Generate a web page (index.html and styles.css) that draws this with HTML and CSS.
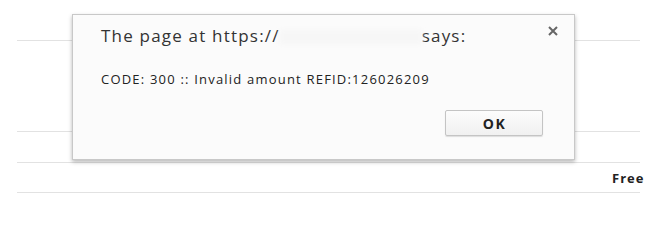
FILE: index.html
```html
<!DOCTYPE html>
<html>
<head>
<meta charset="utf-8">
<link rel="stylesheet" href="styles.css">
</head>
<body>
<div class="page">
  <div class="rows">
    <div class="row row-a"></div>
    <div class="row row-b"></div>
    <div class="row row-c"></div>
    <div class="row row-d"><span class="cell-label">Free</span></div>
  </div>
  <div class="dialog">
    <div class="title">The page at https://<span class="blur"></span>says:</div>
    <div class="message">CODE: 300 :: Invalid amount REFID:126026209</div>
    <div class="actions"><button class="ok">OK</button></div>
    <svg class="close" width="10" height="10" viewBox="0 0 10 10"><path d="M1 1 L9 9 M9 1 L1 9" stroke="#666" stroke-width="2" fill="none"/></svg>
  </div>
</div>
</body>
</html>
```

FILE: styles.css
```css
html, body {
  margin: 0;
  padding: 0;
  background: #ffffff;
}
.page {
  position: relative;
  width: 645px;
  height: 204px;
  overflow: hidden;
  font-family: "Open Sans", "DejaVu Sans", sans-serif;
}
.rows {
  margin-left: 17px;
  width: 623px;
  display: flex;
  flex-direction: column;
}
.row {
  border-bottom: 1px solid #e2e2e2;
  box-sizing: border-box;
}
.row-a { height: 41px; }
.row-b { height: 91px; }
.row-c { height: 31px; }
.row-d {
  height: 30px;
  display: flex;
  align-items: center;
  padding-left: 595px;
  white-space: nowrap;
}
.cell-label {
  font-weight: bold;
  font-size: 13px;
  letter-spacing: 1px;
  color: #222;
}
.dialog {
  position: absolute;
  left: 72px;
  top: 14px;
  width: 503px;
  height: 146px;
  box-sizing: border-box;
  background: #fbfbfb;
  border: 1px solid #c8c8c8;
  box-shadow: 0 2px 4px rgba(0,0,0,0.28);
  padding: 11px 31px 0 28px;
}
.title {
  font-size: 17px;
  line-height: 20px;
  letter-spacing: 1.2px;
  color: #333;
  white-space: nowrap;
}
.blur {
  display: inline-block;
  width: 142px;
  height: 14px;
  background: #f6f6f6;
  filter: blur(2px);
  vertical-align: middle;
}
.message {
  margin-top: 24px;
  font-size: 13px;
  line-height: 18px;
  letter-spacing: 1.2px;
  color: #222;
  white-space: nowrap;
}
.actions {
  display: flex;
  justify-content: flex-end;
  margin-top: 22px;
}
.ok {
  width: 98px;
  height: 26px;
  box-sizing: border-box;
  border: 1px solid #c4c4c4;
  border-radius: 2px;
  background: linear-gradient(#fcfcfc, #f0f0f0);
  box-shadow: 0 1px 1px rgba(0,0,0,0.12);
  font-family: "Open Sans", "DejaVu Sans", sans-serif;
  font-weight: bold;
  font-size: 14px;
  letter-spacing: 1.5px;
  color: #222;
  padding: 0 0 0 1px;
}
.close {
  position: absolute;
  left: 475px;
  top: 11px;
}
```
